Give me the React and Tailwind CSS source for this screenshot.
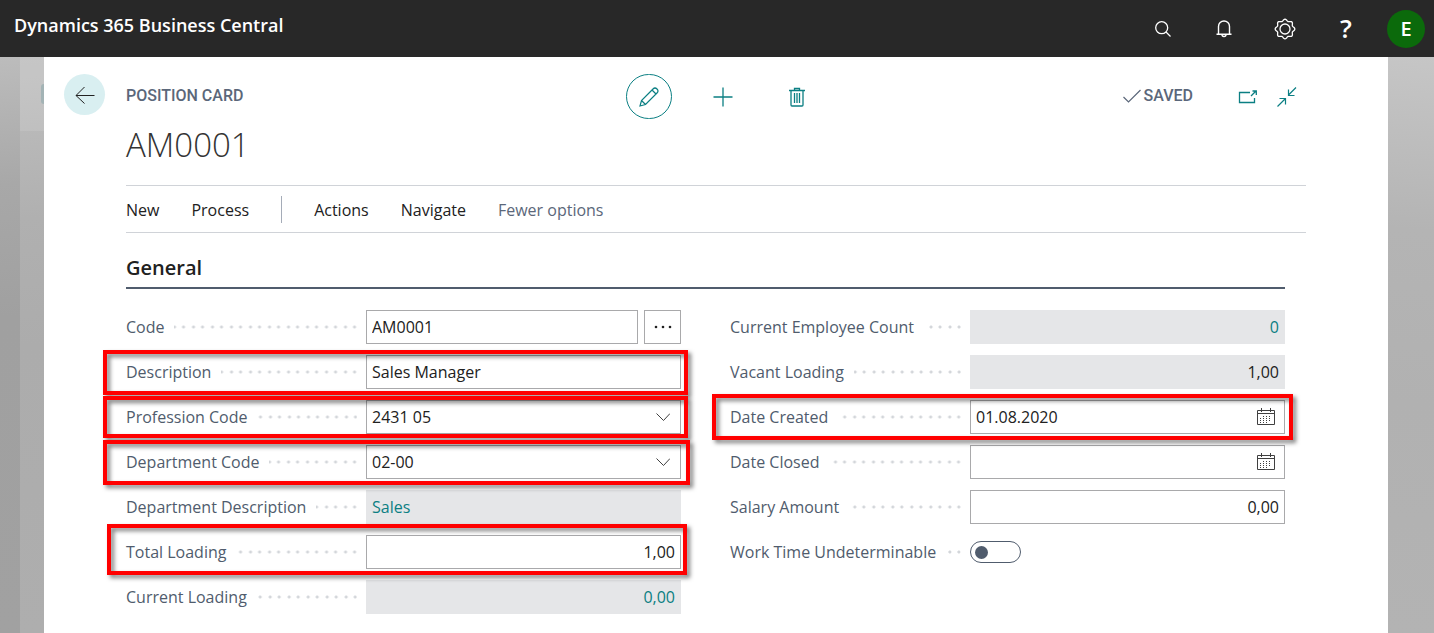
const TEAL = 'text-[#0b7f83]';

const INPUT =
  'h-[34px] w-full min-w-0 rounded-none border border-[#a9a9ab] bg-white px-[5px] text-base text-[#212121] outline-none';
const READONLY =
  'h-[34px] w-full min-w-0 rounded-none border border-[#e5e6e8] bg-[#e5e6e8] px-[5px] text-base outline-none';

function Leader() {
  return (
    <span
      aria-hidden="true"
      className="mr-[9px] ml-[10px] h-1 flex-1 bg-[radial-gradient(circle_at_8px_2px,#d3d6da_1px,transparent_2px),radial-gradient(circle_at_17px_2px,#d3d6da_1px,transparent_2px)] bg-[length:19px_4px] bg-right bg-repeat-x"
    />
  );
}

function Field({ id, label, frame, children }) {
  return (
    <div className="relative flex h-[34px] items-center">
      <div className="flex w-60 shrink-0 items-center">
        <label htmlFor={id} className="text-base whitespace-nowrap text-[#505c6d]">
          {label}
        </label>
        <Leader />
      </div>
      <div className="flex min-w-0 flex-1 items-center gap-[6px]">{children}</div>
      {frame && (
        <span
          aria-hidden="true"
          className={`pointer-events-none absolute z-10 border-4 border-[#ff0000] drop-shadow-[3px_3px_2px_rgba(0,0,0,0.5)] ${frame}`}
        />
      )}
    </div>
  );
}

function IconInput({ id, value, buttonLabel, icon }) {
  return (
    <div className="flex h-[34px] w-full items-center border border-[#a9a9ab] bg-white">
      <input
        id={id}
        type="text"
        defaultValue={value}
        className="h-full min-w-0 flex-1 bg-transparent px-[5px] text-base text-[#212121] outline-none"
      />
      <button type="button" aria-label={buttonLabel} className="flex h-full w-9 items-center justify-center text-[#404040]">
        {icon}
      </button>
    </div>
  );
}

const Chevron = () => (
  <svg width="16" height="10" viewBox="0 0 16 10" fill="none" stroke="currentColor" strokeWidth="1">
    <path d="M2.500 1.500 9.500 8.500l6.500-7" />
  </svg>
);

const Calendar = () => (
  <svg width="20" height="18" viewBox="0 0 20 18" fill="none" stroke="currentColor" strokeWidth="1">
    <path d="M1.500 2.500h17v14h-17zM1.500 5.500h17M5.500 0v4M14.500 0v4" />
    <path d="M7 8.500h9M4 10.500h12M4 12.500h12M4 14.500h9" strokeDasharray="1 2" />
  </svg>
);

const svgBase = { fill: 'none', stroke: 'currentColor' };

const gearPoints = Array.from({ length: 97 }, (_, i) => {
  const a = (i / 96) * Math.PI * 2;
  const r = 8.9 + 0.9 * Math.cos(8 * a);
  return `${(11 + r * Math.sin(a)).toFixed(2)},${(11 - r * Math.cos(a)).toFixed(2)}`;
}).join(' ');

function TopBar() {
  return (
    <header className="flex h-[57px] items-center justify-between bg-[#282828] pr-[9px] pl-[14px] text-white">
      <a href="#" className="pb-2 text-lg font-semibold">
        Dynamics 365 Business Central
      </a>
      <div className="flex items-center gap-[21px]">
        <button type="button" aria-label="Search" className="flex h-10 w-10 items-center justify-center">
          <svg width="18" height="18" viewBox="0 0 18 18" {...svgBase} strokeWidth="1.300">
            <circle cx="7.700" cy="7.700" r="6" />
            <path d="m12 12 4.500 4.500" />
          </svg>
        </button>
        <button type="button" aria-label="Notifications" className="flex h-10 w-10 items-center justify-center">
          <svg width="16" height="18" viewBox="0 0 16 18" {...svgBase} strokeWidth="1.400">
            <path d="M2.500 14V6.500a5.500 5.500 0 0 1 11 0V14M.5 14.300h15" />
            <path d="M6 14.500a2 2 0 0 0 4 0" />
          </svg>
        </button>
        <button type="button" aria-label="Settings" className="flex h-10 w-10 items-center justify-center">
          <svg width="22" height="22" viewBox="0 0 22 22" {...svgBase} strokeWidth="1.300">
            <polygon points={gearPoints} />
            <circle cx="11" cy="11" r="5" />
          </svg>
        </button>
        <button type="button" aria-label="Help" className="flex h-10 w-10 items-center justify-center text-[26px] font-semibold">
          ?
        </button>
        <button type="button" aria-label="Account" className="flex h-[38px] w-[38px] items-center justify-center rounded-full bg-[#0b6a0b] text-xl font-semibold">
          E
        </button>
      </div>
    </header>
  );
}

function CardHeader() {
  return (
    <div className="flex">
      <button type="button" aria-label="Back" className="flex h-[41px] w-[41px] shrink-0 items-center justify-center rounded-full bg-[#d9eff1] text-[#212121]">
        <svg width="20" height="18" viewBox="0 0 20 18" {...svgBase} strokeWidth="1">
          <path d="M9.500 1 1 9.500l8.500 8M1 9.500h18.500" />
        </svg>
      </button>
      <div className="ml-[21px] flex flex-1 items-center font-[Roboto,sans-serif]">
        <h2 className="flex-1 pb-[2px] text-base font-medium text-[#5b677a]">POSITION CARD</h2>
        <div className={`ml-[22px] flex items-center gap-7 ${TEAL}`}>
          <button type="button" aria-label="Edit" className="flex h-[45px] w-[46px] items-center justify-center rounded-full border border-[#0b7f83]">
            <svg width="20" height="20" viewBox="0 0 20 20" {...svgBase} strokeWidth="1.200">
              <path d="M1 19l1.500-5.500L14 2a2.500 2.500 0 0 1 4 4L6.500 17.500zM13 3l4 4M2.500 13.500l4 4" />
            </svg>
          </button>
          <button type="button" aria-label="New record" className="flex h-[45px] w-[46px] items-center justify-center">
            <svg width="20" height="20" viewBox="0 0 20 20" {...svgBase} strokeWidth="1.300">
              <path d="M10 .5v19M.5 10h19" />
            </svg>
          </button>
          <button type="button" aria-label="Delete" className="flex h-[45px] w-[46px] items-center justify-center">
            <svg width="16" height="20" viewBox="0 0 16 20" {...svgBase} strokeWidth="1.300">
              <path d="M0 3.500h16M5.500 3.500v-2h5v2M2 3.500v14.500a1 1 0 0 0 1 1h10a1 1 0 0 0 1-1V3.500M5.500 6v10M8 6v10M10.500 6v10" />
            </svg>
          </button>
        </div>
        <div className="flex flex-1 items-center justify-end pr-[9px]">
          <span className="flex items-center gap-[3px] pb-[2px] text-base font-medium text-[#5b677a]">
            <svg width="18" height="14" viewBox="0 0 18 14" {...svgBase} strokeWidth="1.200">
              <path d="m.5 8 5 5L17.500 1" />
            </svg>
            SAVED
          </span>
          <button type="button" aria-label="Open in new window" className={`ml-[45px] ${TEAL}`}>
            <svg width="20" height="14" viewBox="0 0 20 14" {...svgBase} strokeWidth="1.300">
              <path d="M12 2.500H1.500v10h15V8M13 6l5-5M14.500 1h3.800v4" />
            </svg>
          </button>
          <button type="button" aria-label="Collapse" className={`ml-[19px] ${TEAL}`}>
            <svg width="20" height="20" viewBox="0 0 20 20" {...svgBase} strokeWidth="1.200">
              <path d="M19 .5l-7.500 7.500M11.500 2.500v6h6M.5 19.500 8 12M2.500 11.500h6v6" />
            </svg>
          </button>
        </div>
      </div>
    </div>
  );
}

export default function App() {
  return (
    <div className="flex min-h-screen flex-col bg-[#a9a9a9] font-['Open_Sans','Noto_Sans',sans-serif]">
      <TopBar />
      <div className="flex flex-1">
        <div
          aria-hidden="true"
          className="w-5 shrink-0 bg-[linear-gradient(175deg,#bcbcbc,#a8a8a8_22%,#a0a0a0_45%,#a1a1a1)]"
        />
        <div
          aria-hidden="true"
          className="flex w-6 shrink-0 flex-col items-end overflow-hidden bg-[linear-gradient(175deg,#c0c0c0,#b0b0b0_28%,#acacac_50%,#aeaeae)]"
        >
          <div className="flex h-[74px] w-full items-center justify-end bg-white/10">
            <span className="h-5 w-[3px] rounded-l-full bg-[#a3b3b5]" />
          </div>
        </div>
        <main className="min-w-0 flex-1 bg-white pt-[17px] pr-[82px] pb-5 pl-5">
          <CardHeader />
          <div className="ml-[62px]">
            <h1 className="mt-[2px] text-[33px] leading-[48px] font-light text-[#333]">AM0001</h1>
            <nav className="mt-4 flex h-12 items-center gap-8 border-y border-[#d0d3d8] pt-[2px] text-base font-[390] text-[#212121]">
              <button type="button">New</button>
              <button type="button">Process</button>
              <span className="mb-[2px] h-[27px] w-px bg-[#a5acb8]" />
              <button type="button">Actions</button>
              <button type="button">Navigate</button>
              <button type="button" className="text-[#5b677a]">Fewer options</button>
            </nav>
            <div className="mr-[21px]">
              <h3 className="mt-[19px] border-b-2 border-[#505c6d] pb-[3px] text-xl leading-8 font-semibold text-[#212121]">General</h3>
              <form className="mt-[21px] grid grid-cols-2 gap-x-[49px] font-[380]">
                <div className="flex flex-col gap-[11px]">
                  <Field id="code" label="Code">
                    <input id="code" type="text" defaultValue="AM0001" className={INPUT} />
                    <button type="button" aria-label="Assist edit" className="flex h-[34px] w-[37px] shrink-0 items-center justify-center border border-[#a9a9ab] text-[#212121]">
                      <svg width="18" height="4" viewBox="0 0 18 4" fill="currentColor">
                        <circle cx="2" cy="2" r="1.300" />
                        <circle cx="9" cy="2" r="1.300" />
                        <circle cx="16" cy="2" r="1.300" />
                      </svg>
                    </button>
                  </Field>
                  <Field id="desc" label="Description" frame="-top-[5px] -right-[7px] -bottom-[6px] -left-[23px]">
                    <input id="desc" type="text" defaultValue="Sales Manager" className={INPUT} />
                  </Field>
                  <Field id="prof" label="Profession Code" frame="-top-1 -right-[7px] -bottom-1 -left-[23px]">
                    <IconInput id="prof" value="2431 05" buttonLabel="Choose profession code" icon={<Chevron />} />
                  </Field>
                  <Field id="dept" label="Department Code" frame="-top-[5px] -right-[9px] -bottom-[6px] -left-[23px]">
                    <IconInput id="dept" value="02-00" buttonLabel="Choose department code" icon={<Chevron />} />
                  </Field>
                  <Field id="deptdesc" label="Department Description">
                    <input id="deptdesc" type="text" readOnly defaultValue="Sales" className={`${READONLY} ${TEAL}`} />
                  </Field>
                  <Field id="total" label="Total Loading" frame="-top-[11px] -right-[6px] -bottom-[6px] -left-[19px]">
                    <input id="total" type="text" defaultValue="1,00" className={`${INPUT} text-right`} />
                  </Field>
                  <Field id="current" label="Current Loading">
                    <input id="current" type="text" readOnly defaultValue="0,00" className={`${READONLY} text-right ${TEAL}`} />
                  </Field>
                </div>
                <div className="flex flex-col gap-[11px]">
                  <Field id="count" label="Current Employee Count">
                    <input id="count" type="text" readOnly defaultValue="0" className={`${READONLY} text-right ${TEAL}`} />
                  </Field>
                  <Field id="vacant" label="Vacant Loading">
                    <input id="vacant" type="text" readOnly defaultValue="1,00" className={`${READONLY} text-right text-[#212121]`} />
                  </Field>
                  <Field id="created" label="Date Created" frame="-top-[6px] -right-2 -bottom-[6px] -left-[18px]">
                    <IconInput id="created" value="01.08.2020" buttonLabel="Pick date created" icon={<Calendar />} />
                  </Field>
                  <Field id="closed" label="Date Closed">
                    <IconInput id="closed" value="" buttonLabel="Pick date closed" icon={<Calendar />} />
                  </Field>
                  <Field id="salary" label="Salary Amount">
                    <input id="salary" type="text" defaultValue="0,00" className={`${INPUT} text-right`} />
                  </Field>
                  <Field id="wtu" label="Work Time Undeterminable">
                    <input
                      id="wtu"
                      type="checkbox"
                      role="switch"
                      className="flex h-[22px] w-[51px] appearance-none items-center rounded-full border border-[#505c6d] px-1 before:h-[13px] before:w-[13px] before:rounded-full before:bg-[#505c6d] checked:justify-end"
                    />
                  </Field>
                </div>
              </form>
            </div>
          </div>
        </main>
        <div
          aria-hidden="true"
          className="w-[46px] shrink-0 bg-[linear-gradient(185deg,#c6c6c6,#b4b4b4_30%,#b1b1b1_60%,#b3b3b3)]"
        />
      </div>
    </div>
  );
}
